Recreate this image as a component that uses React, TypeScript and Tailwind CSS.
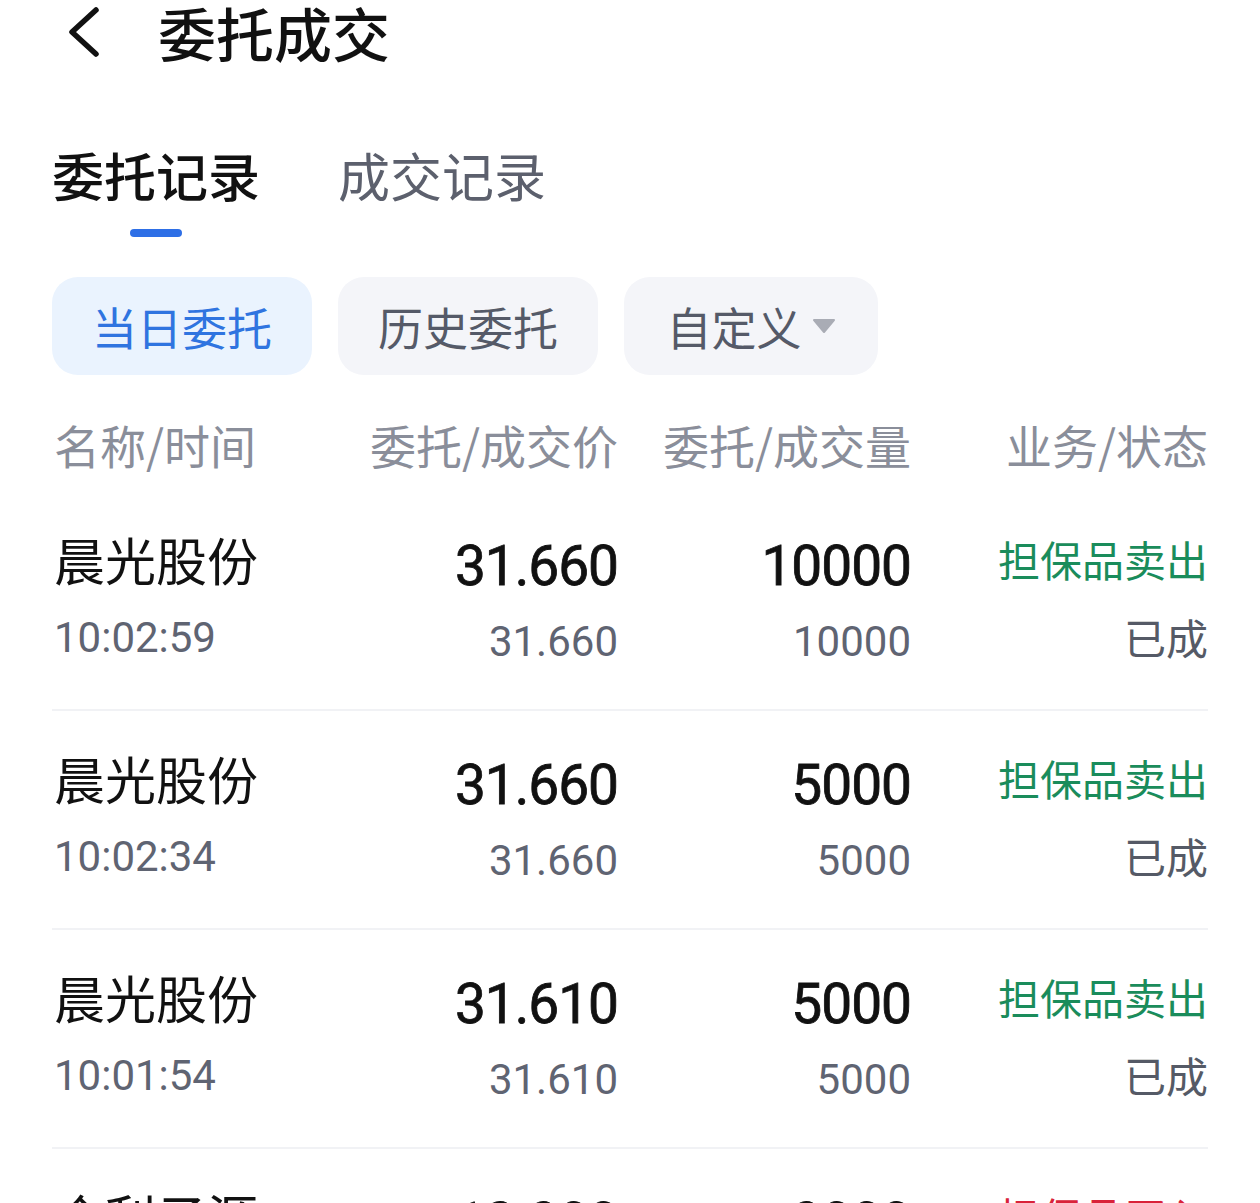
import React from "react";

const cjk = { fontFamily: '"Noto Sans CJK SC", "Noto Sans", sans-serif' };
const num = { fontFamily: 'Roboto, "Noto Sans", sans-serif' };

type Row = { name: string; time: string; price: string; price2: string; qty: string; qty2: string; biz: string; status: string; red?: boolean };

const rows: Row[] = [
  { name: "晨光股份", time: "10:02:59", price: "31.660", price2: "31.660", qty: "10000", qty2: "10000", biz: "担保品卖出", status: "已成" },
  { name: "晨光股份", time: "10:02:34", price: "31.660", price2: "31.660", qty: "5000", qty2: "5000", biz: "担保品卖出", status: "已成" },
  { name: "晨光股份", time: "10:01:54", price: "31.610", price2: "31.610", qty: "5000", qty2: "5000", biz: "担保品卖出", status: "已成" },
  { name: "合利子源", time: "10:01:20", price: "12.300", price2: "12.300", qty: "3000", qty2: "3000", biz: "担保品买入", status: "已成", red: true },
];

export default function App() {
  return (
    <div className="w-[1260px] h-[1203px] overflow-hidden bg-white" style={cjk}>
      {/* header */}
      <div className="h-[70px] flex items-center pl-[66px] -mt-[3px]">
        <svg width="36" height="52" viewBox="0 0 36 52" fill="none">
          <path d="M30 4 L6 26 L30 48" stroke="#111" strokeWidth="5.5" strokeLinecap="round" strokeLinejoin="round" />
        </svg>
        <span className="ml-[56px] text-[58px] leading-none text-[#111] font-medium">委托成交</span>
      </div>

      {/* tabs */}
      <div className="px-[52px] mt-[78px] flex gap-[78px]">
        <div className="flex flex-col items-center">
          <div className="h-[60px] flex items-center text-[52px] leading-none text-[#111] font-medium">委托记录</div>
          <div className="mt-[24px] w-[52px] h-[8px] rounded-full bg-[#2e6fe6]" />
        </div>
        <div className="h-[60px] flex items-center text-[52px] leading-none text-[#5c606d]">成交记录</div>
      </div>

      {/* filter pills */}
      <div className="px-[52px] mt-[40px] flex gap-[26px]">
        <div className="w-[260px] h-[98px] rounded-[26px] bg-[#eaf3fe] flex items-center justify-center text-[45px] leading-none text-[#2f74e0]">当日委托</div>
        <div className="w-[260px] h-[98px] rounded-[26px] bg-[#f4f5f9] flex items-center justify-center text-[45px] leading-none text-[#555a68]">历史委托</div>
        <div className="w-[254px] h-[98px] rounded-[26px] bg-[#f4f5f9] flex items-center justify-center text-[45px] leading-none text-[#555a68]">
          <span>自定义</span>
          <svg className="ml-[10px]" width="24" height="16" viewBox="0 0 24 16">
            <path d="M2 2 H22 L12 14 Z" fill="#a9acb5" stroke="#a9acb5" strokeWidth="2" strokeLinejoin="round" />
          </svg>
        </div>
      </div>

      {/* column header */}
      <div className="px-[52px] mt-[27px] h-[90px] flex items-center text-[46px] leading-none text-[#8a8e9a]">
        <div className="w-[300px] pl-[2px] -mt-[6px]">名称/时间</div>
        <div className="w-[266px] text-right -mt-[6px]">委托/成交价</div>
        <div className="w-[293px] text-right -mt-[6px]">委托/成交量</div>
        <div className="flex-1 text-right -mt-[6px]">业务/状态</div>
      </div>

      {/* rows */}
      <div className="px-[52px]">
        {rows.map((r, i) => (
          <div key={i} className="h-[219px] border-b-2 border-[#f1f2f5] flex flex-col">
            <div className="mt-[41px] h-[60px] flex items-center">
              <div className="w-[300px] pl-[2px] text-[51px] leading-none text-[#111] -mt-[8px]">{r.name}</div>
              <div className="w-[266px] text-right text-[55px] leading-none text-[#111] tracking-[-1px] mt-[7px] [-webkit-text-stroke:0.8px_#111]" style={num}>{r.price}</div>
              <div className="w-[293px] text-right text-[55px] leading-none text-[#111] tracking-[-1px] mt-[7px] [-webkit-text-stroke:0.8px_#111]" style={num}>{r.qty}</div>
              <div className={"flex-1 text-right text-[42px] leading-none -mt-[8px] " + (r.red ? "text-[#d9233a]" : "text-[#1a8c5b]")}>{r.biz}</div>
            </div>
            <div className="mt-[16px] h-[60px] flex items-center">
              <div className="w-[300px] pl-[2px] text-[42px] leading-none text-[#5f6472] -mt-[2px]" style={num}>{r.time}</div>
              <div className="w-[266px] text-right text-[42px] leading-none text-[#5f6472] mt-[6px]" style={num}>{r.price2}</div>
              <div className="w-[293px] text-right text-[42px] leading-none text-[#5f6472] mt-[6px]" style={num}>{r.qty2}</div>
              <div className="flex-1 text-right text-[42px] leading-none text-[#555a66] -mt-[4px]">{r.status}</div>
            </div>
          </div>
        ))}
      </div>
    </div>
  );
}
